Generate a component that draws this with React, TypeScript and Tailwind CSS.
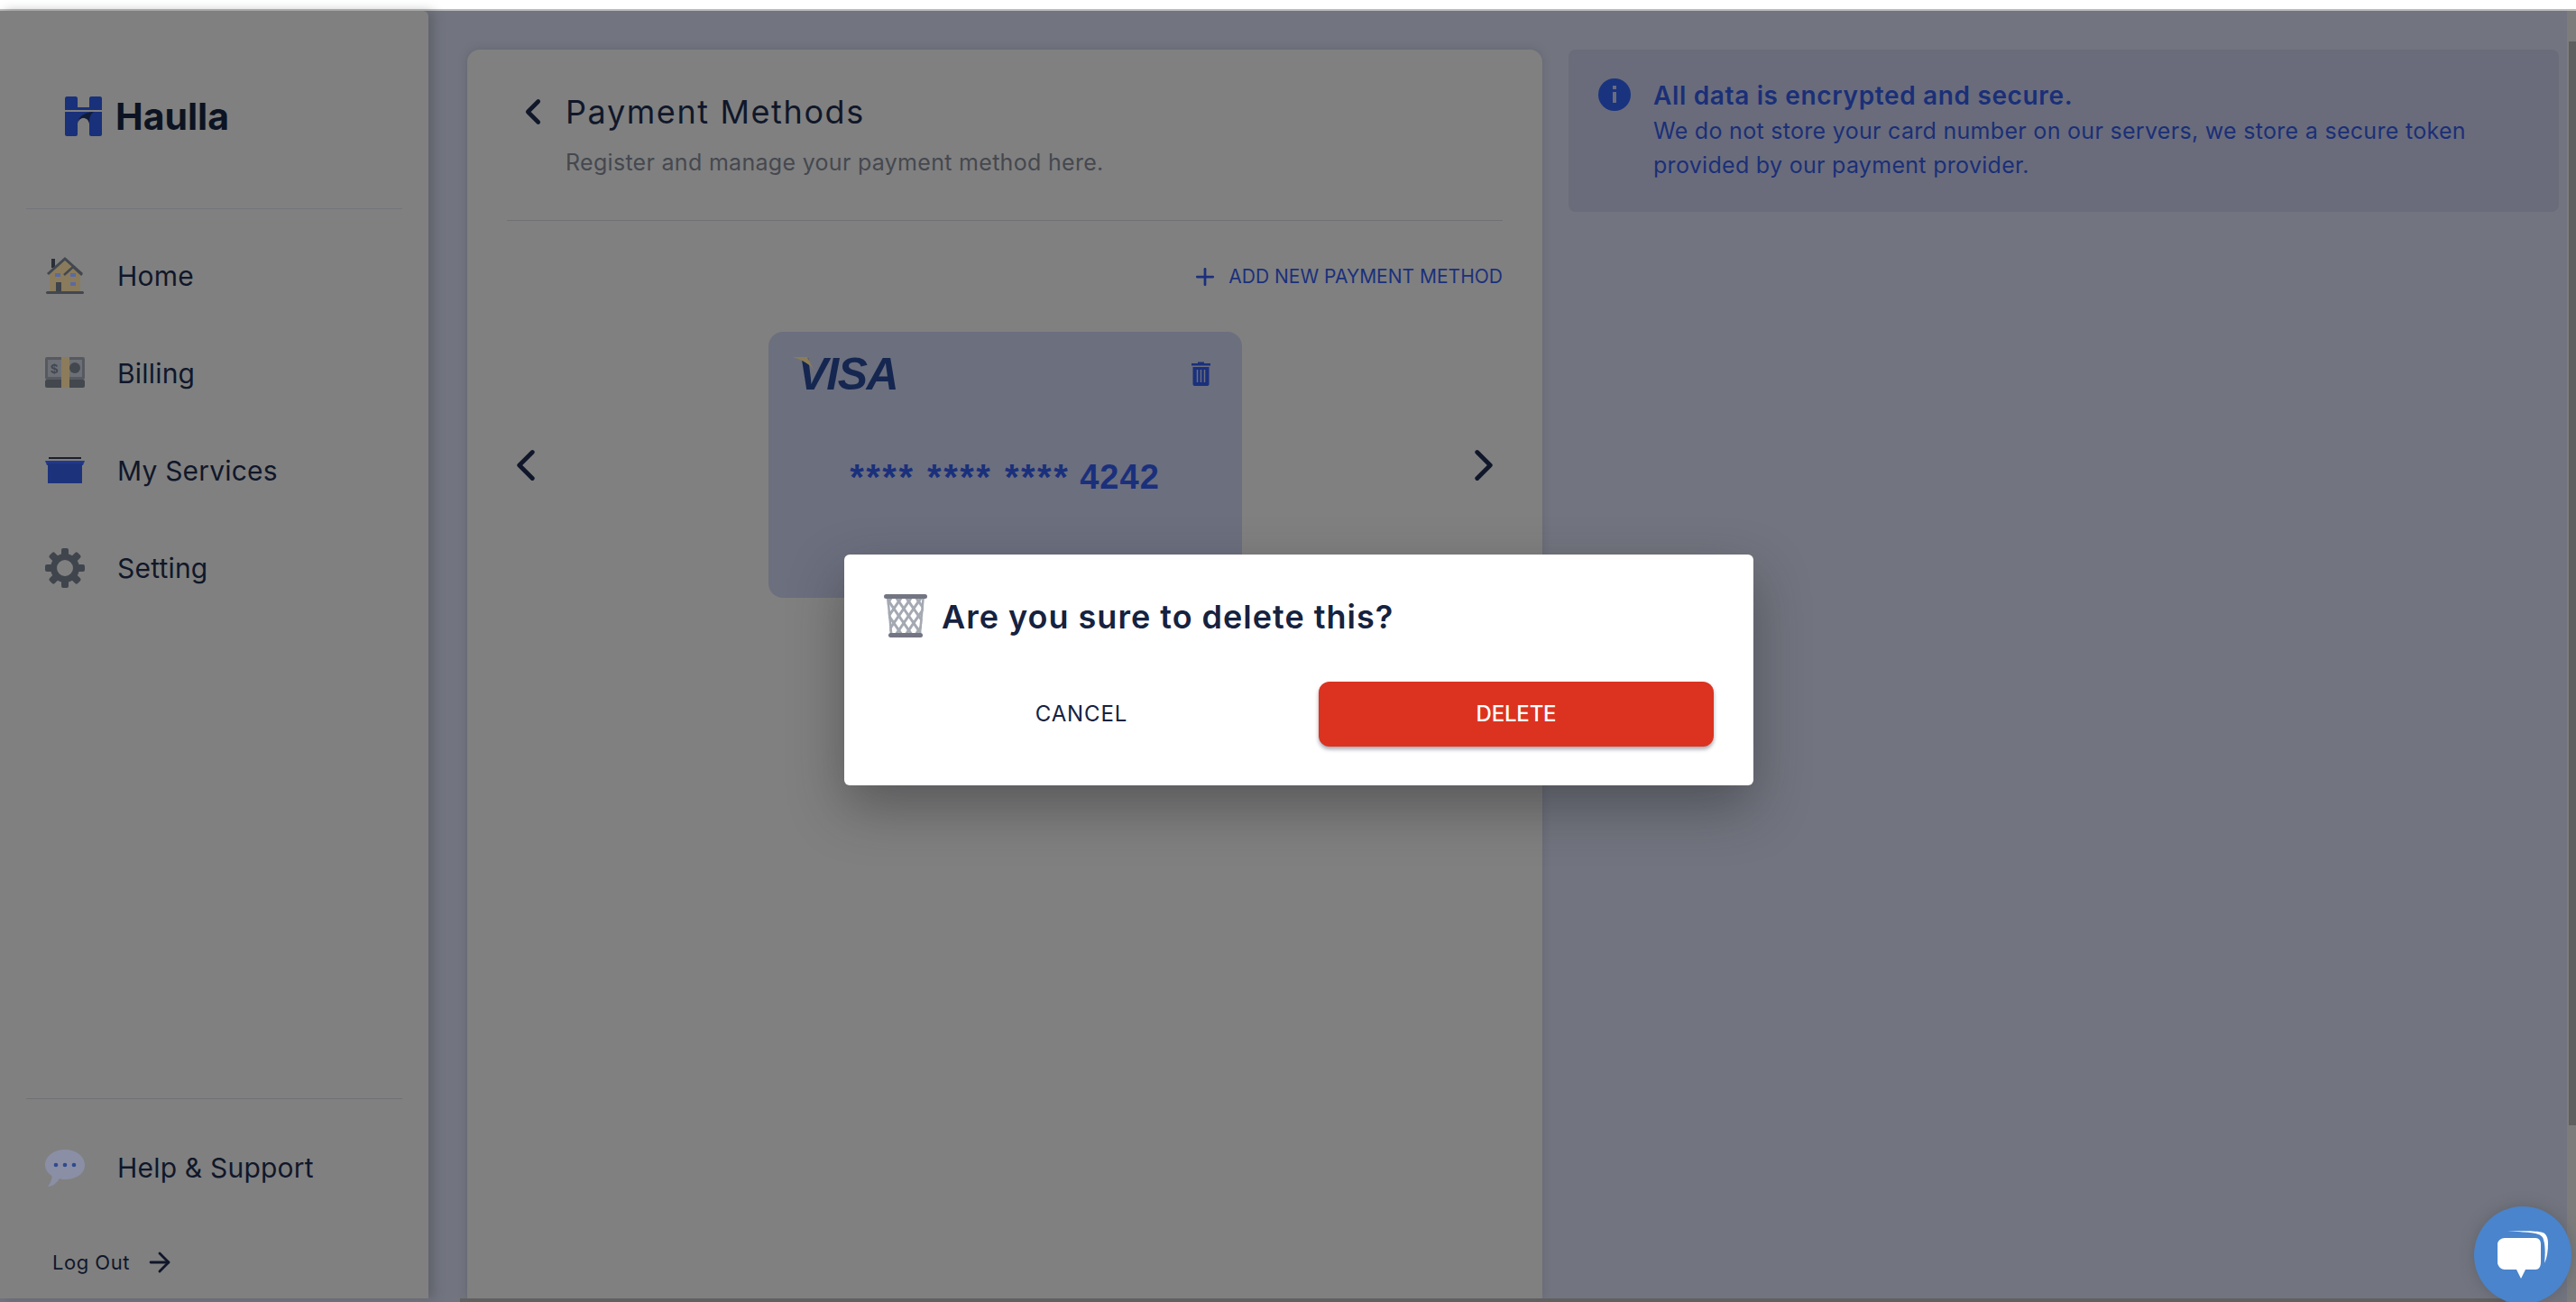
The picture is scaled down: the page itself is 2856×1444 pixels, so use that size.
import { ChevronLeft, ChevronRight, ArrowRight, Plus } from "lucide-react";

const HouseIcon = () => (
    <svg viewBox="0 0 44 44" className="w-[44px] h-[44px]">
        <rect x="7" y="3" width="4" height="10" fill="#2a2e36" />
        <path d="M5 19 L22 5 L39 19 V40 H5 Z" fill="#8a7b5c" />
        <path d="M3 20 L22 3 L41 20" fill="none" stroke="#434850" strokeWidth="3" />
        <path d="M21 21 L31 12 L41 21" fill="none" stroke="#434850" strokeWidth="2.5" />
        <rect x="11" y="19" width="6" height="4" fill="#5b69a3" />
        <rect x="28" y="19" width="6" height="4" fill="#5b69a3" />
        <rect x="28" y="29" width="6" height="4" fill="#5b69a3" />
        <rect x="12" y="29" width="6" height="11" fill="#3e434b" />
        <rect x="1" y="39" width="42" height="3" rx="1.5" fill="#43484f" />
    </svg>
);

const BillingIcon = () => (
    <svg viewBox="0 0 44 36" className="w-[44px] h-[36px]">
        <rect x="0" y="0" width="44" height="25" rx="2" fill="#565a60" />
        <rect x="3" y="3" width="38" height="19" fill="#6c7076" />
        <rect x="0" y="25" width="44" height="9" rx="2" fill="#43474e" />
        <rect x="18" y="0" width="9" height="34" fill="#8c7c5c" />
        <circle cx="33" cy="12" r="6" fill="#43474e" />
        <text x="6" y="18" fontSize="15" fontWeight="700" fill="#43474e" fontFamily="'Liberation Sans', sans-serif">$</text>
    </svg>
);

const ServicesIcon = () => (
    <svg viewBox="0 0 44 30" className="w-[44px] h-[30px]">
        <rect x="4" y="0" width="36" height="2" fill="#1c1f2b" />
        <path d="M0 4 H44 L42 9 H2 Z" fill="#22398a" />
        <rect x="3" y="7" width="38" height="22" fill="#1c337c" />
    </svg>
);

const GearIcon = () => (
    <svg viewBox="0 0 44 44" className="w-[44px] h-[44px]">
        <g fill="#40454d">
            {[0, 45, 90, 135, 180, 225, 270, 315].map((a) => (
                <rect key={a} x="18" y="0" width="8" height="10" rx="2" transform={`rotate(${a} 22 22)`} />
            ))}
        </g>
        <circle cx="22" cy="22" r="12.5" fill="none" stroke="#40454d" strokeWidth="7" />
    </svg>
);

const HelpIcon = () => (
    <svg viewBox="0 0 44 42" className="w-[44px] h-[42px]">
        <path d="M22 0 C34 0 44 7 44 17 C44 27 34 33 22 33 C20 33 18 33 16 32 C13 37 8 41 3 41 C6 37 8 33 7.500 29 C3 26 0 22 0 17 C0 7 10 0 22 0 Z" fill="#8a8fa5" />
        <circle cx="12" cy="17" r="2.300" fill="#2f4a8f" />
        <circle cx="22" cy="17" r="2.300" fill="#2f4a8f" />
        <circle cx="32" cy="17" r="2.300" fill="#2f4a8f" />
    </svg>
);

const BasketIcon = () => (
    <svg viewBox="0 0 48 48" className="w-[48px] h-[48px]">
        <defs>
            <clipPath id="basket-body">
                <path d="M3 3 H45 L41 45 H7 Z" />
            </clipPath>
        </defs>
        <g clipPath="url(#basket-body)" stroke="#a4a9b2" strokeWidth="3" fill="none">
            {[-44, -33, -22, -11, 0, 11, 22, 33, 44].map((x) => (
                <g key={x}>
                    <path d={`M${x} 0 L${x + 33} 48`} />
                    <path d={`M${x + 33} 0 L${x} 48`} />
                </g>
            ))}
            <path d="M3 3 L7 45 M45 3 L41 45" strokeWidth="5" />
        </g>
        <rect x="0" y="0" width="48" height="5" rx="2.500" fill="#737582" />
        <rect x="5" y="43" width="38" height="5" rx="2.500" fill="#737582" />
    </svg>
);

const CardTrash = () => (
    <svg viewBox="0 0 21 27" className="w-[21px] h-[27px]">
        <path d="M7 2 V0.500 H14 V2 H21 V4.500 H0 V2 Z" fill="#1a307c" />
        <path d="M1.500 6 H19.500 V25 C19.500 26 18.500 27 17.500 27 H3.500 C2.500 27 1.500 26 1.500 25 Z" fill="#1a307c" />
        <path d="M6.500 9 V23 M10.500 9 V23 M14.500 9 V23" stroke="#6b6e7d" strokeWidth="1.500" />
    </svg>
);

const LogoMark = () => (
    <svg viewBox="0 0 41 44" className="w-[41px] h-[44px]">
        <path d="M2 0 H12 C13 0 14 1 14 2 V12 H27 V2 C27 1 28 0 29 0 H39 C40 0 41 1 41 2 V15 H0 V2 C0 1 1 0 2 0 Z" fill="#19307a" />
        <path d="M0 17 H41 V42 C41 43 40 44 39 44 H29 C28 44 27 43 27 42 V30 C27 24 22 24 19 24 C16 24 14 27 14 30 V42 C14 43 13 44 12 44 H2 C1 44 0 43 0 42 Z" fill="#19307a" />
        <path d="M14 30 C15 22 22 17 33 17 C28 18 27 24 27 30 C26 25 22 23 19 24 C16 25 15 27 14 30 Z" fill="#101a35" />
    </svg>
);

const navItems = [
    { label: "Home", icon: HouseIcon },
    { label: "Billing", icon: BillingIcon },
    { label: "My Services", icon: ServicesIcon },
    { label: "Setting", icon: GearIcon },
];

export default function App() {
    return (
        <div className="relative h-[1444px] w-full overflow-hidden bg-[#72757f] font-['Inter',sans-serif]">
            <div className="h-[10px] bg-white" />
            <div className="h-[2px] bg-[#bdbdbd]" />

            <div className="flex h-[1428px]">
                {/* Sidebar */}
                <aside className="relative flex w-[475px] shrink-0 flex-col rounded-tr-[6px] bg-[#808080] shadow-[6px_0_12px_rgba(60,62,70,0.35)]">
                    <div className="flex h-[219px] shrink-0 items-start gap-[15px] pl-[72px] pt-[95px]">
                        <LogoMark />
                        <span className="text-[41px] leading-[44px] font-bold tracking-[0px] text-[#0c1322]">Haulla</span>
                    </div>
                    <div className="mx-[29px] h-px bg-[#74757a]" />

                    <nav className="mt-[20px] flex flex-col">
                        {navItems.map((item) => (
                            <div key={item.label} className="flex h-[108px] items-center pl-[50px]">
                                <div className="flex w-[44px] shrink-0 items-center justify-center">
                                    <item.icon />
                                </div>
                                <span className="ml-[36px] text-[30px] font-normal tracking-[0.2px] text-[#10172a]">{item.label}</span>
                            </div>
                        ))}
                    </nav>

                    <div className="mt-auto">
                        <div className="mx-[29px] h-px bg-[#6f7075]" />
                        <div className="mt-[54px] flex items-center pl-[50px]">
                            <HelpIcon />
                            <span className="ml-[36px] text-[30px] font-normal tracking-[0.2px] text-[#10172a]">Help &amp; Support</span>
                        </div>
                        <div className="mb-[23px] mt-[65px] flex items-center pl-[58px]">
                            <span className="text-[22px] font-normal tracking-[0.5px] text-[#10172a]">Log Out</span>
                            <ArrowRight className="ml-[16px] h-[34px] w-[34px] text-[#10172a]" strokeWidth={2} />
                        </div>
                    </div>
                </aside>

                {/* Main */}
                <main className="flex min-w-0 flex-1 gap-[29px] pl-[43px] pt-[43px] pr-[19px]">
                    <section className="flex w-[1192px] shrink-0 flex-col rounded-t-[14px] bg-[#808080] px-[44px] shadow-[0_0_10px_rgba(70,72,85,0.35)]">
                        <div className="flex h-[190px] flex-col border-b border-[#6f7075]">
                            <div className="mt-[47px] flex h-[44px] items-center pl-[6px]">
                                <ChevronLeft className="h-[46px] w-[46px] text-[#10172a]" strokeWidth={2.4} />
                                <span className="ml-[13px] text-[36px] font-normal tracking-[1.6px] text-[#10172a]">Payment Methods</span>
                            </div>
                            <p className="ml-[65px] mt-[16px] text-[25px] leading-[36px] tracking-[0.3px] text-[#45484f]">Register and manage your payment method here.</p>
                        </div>

                        <div className="mt-[44px] flex h-[36px] items-center justify-end">
                            <Plus className="h-[30px] w-[30px] text-[#1a307c]" strokeWidth={2.2} />
                            <span className="ml-[11px] text-[21px] tracking-[0px] text-[#1a307c]">ADD NEW PAYMENT METHOD</span>
                        </div>

                        <div className="-mx-[8px] mt-[43px] flex items-center justify-between">
                            <ChevronLeft className="h-[58px] w-[58px] text-[#10172a]" strokeWidth={2} />
                            <div className="flex h-[295px] w-[525px] flex-col rounded-[16px] bg-[#6c6f7e] pl-[27px] pr-[35px] pt-[22px]">
                                <div className="flex items-start justify-between">
                                    <div className="relative pl-[6px] font-['Liberation_Sans',sans-serif] text-[50px] leading-[50px] font-bold italic tracking-[-1.5px] text-[#152750]">
                                        VISA
                                        <svg viewBox="0 0 24 18" className="absolute left-0 top-[6px] h-[18px] w-[24px]">
                                            <path d="M0 0 H16 L24 16 C20 8 10 3 0 0 Z" fill="#8c7d55" />
                                        </svg>
                                    </div>
                                    <div className="mt-[11px]">
                                        <CardTrash />
                                    </div>
                                </div>
                                <div className="mt-[66px] flex items-start justify-center pl-[8px] font-['Liberation_Sans',sans-serif] font-bold text-[#1a307c]">
                                    <span className="text-[40px] leading-[46px] tracking-[2.500px] whitespace-pre">**** **** ****</span>
                                    <span className="ml-[11px] text-[38px] leading-[46px] tracking-[1px]">4242</span>
                                </div>
                            </div>
                            <ChevronRight className="h-[58px] w-[58px] text-[#10172a]" strokeWidth={2} />
                        </div>
                    </section>

                    <div className="h-[180px] flex-1 rounded-[8px] bg-[#6a6c7b] pl-[33px] pt-[32px]">
                        <div className="flex items-start gap-[25px]">
                            <svg viewBox="0 0 36 36" className="h-[36px] w-[36px] shrink-0">
                                <circle cx="18" cy="18" r="18" fill="#19337f" />
                                <rect x="16" y="15" width="4" height="12" fill="#6a6c7b" />
                                <rect x="16" y="8" width="4" height="4" fill="#6a6c7b" />
                            </svg>
                            <div className="text-[#1a2f78]">
                                <div className="text-[28px] leading-[38px] font-semibold tracking-[0.65px]">All data is encrypted and secure.</div>
                                <p className="mt-[1px] text-[25px] leading-[38px] tracking-[0.3px]">
                                    We do not store your card number on our servers, we store a secure token
                                    <br />
                                    provided by our payment provider.
                                </p>
                            </div>
                        </div>
                    </div>
                </main>
            </div>

            {/* Page bottom edge and scrollbar */}
            <div className="absolute bottom-0 left-[510px] right-[78px] h-[4px] bg-[#606060]" />
            <div className="absolute right-0 top-[12px] bottom-0 w-[10px] bg-[#7c7c7c]">
                <div className="ml-[2px] mt-[34px] h-[1202px] w-[8px] bg-[#5f5f5f]" />
            </div>

            {/* Delete dialog */}
            <div className="absolute left-[936px] top-[615px] h-[256px] w-[1008px] rounded-[6px] bg-white px-[44px] pt-[44px] shadow-[0_24px_60px_rgba(40,40,45,0.45)]">
                <div className="flex h-[48px] items-center gap-[16px]">
                    <BasketIcon />
                    <span className="mt-[2px] text-[36px] font-semibold tracking-[1px] text-[#16223f]">Are you sure to delete this?</span>
                </div>
                <div className="mt-[49px] grid grid-cols-2 gap-[44px]">
                    <button className="flex h-[72px] items-center justify-center text-[24px] font-normal tracking-[0.9px] text-[#16223f]">CANCEL</button>
                    <button className="flex h-[72px] items-center justify-center rounded-[12px] bg-[#db3320] text-[24px] font-medium tracking-[-0.2px] text-white shadow-[0_3px_4px_rgba(60,60,80,0.45)]">DELETE</button>
                </div>
            </div>

            {/* Chat widget */}
            <div className="absolute left-[2743px] top-[1338px] flex h-[108px] w-[108px] items-center justify-center rounded-full bg-[#4a84cc] shadow-[0_0_16px_rgba(60,62,70,0.35)]">
                <svg viewBox="0 0 56 54" className="h-[54px] w-[56px]">
                    <path d="M11 1 C25 0 44 0 50 2 C54 3 56 8 56 14 C56 22 55 30 52 36 C53 26 53 16 51 10 C50 6 47 4 42 3 C32 1 20 1 11 1 Z" fill="#ffffff" />
                    <path d="M8 8 H42 C46 8 48 11 48 15 V34 C48 40 46 43 42 43 H31 L26 53 L21 43 H8 C4 43 1 40 0 36 V15 C0 11 4 8 8 8 Z" fill="#ffffff" />
                </svg>
            </div>
        </div>
    );
}
